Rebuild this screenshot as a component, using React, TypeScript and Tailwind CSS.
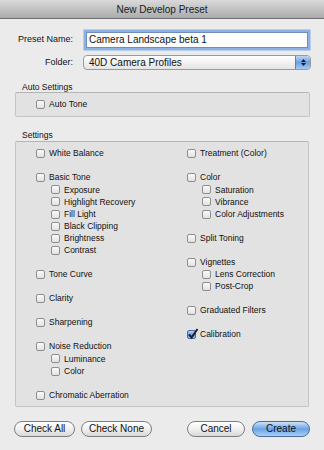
import React from 'react';

type Item = { label: string; sub?: string[]; checked?: boolean };

const leftGroups: Item[] = [
    { label: 'White Balance' },
    { label: 'Basic Tone', sub: ['Exposure', 'Highlight Recovery', 'Fill Light', 'Black Clipping', 'Brightness', 'Contrast'] },
    { label: 'Tone Curve' },
    { label: 'Clarity' },
    { label: 'Sharpening' },
    { label: 'Noise Reduction', sub: ['Luminance', 'Color'] },
    { label: 'Chromatic Aberration' },
];

const rightGroups: Item[] = [
    { label: 'Treatment (Color)' },
    { label: 'Color', sub: ['Saturation', 'Vibrance', 'Color Adjustments'] },
    { label: 'Split Toning' },
    { label: 'Vignettes', sub: ['Lens Correction', 'Post-Crop'] },
    { label: 'Graduated Filters' },
    { label: 'Calibration', checked: true },
];

const Checkbox = ({ checked }: { checked?: boolean }) => {
    if (checked) {
        return (
            <span className="relative block w-[9px] h-[9px] rounded-[2px] border border-[#4a6a9c] bg-gradient-to-b from-[#b9d4f3] via-[#6d9fe0] to-[#9ec7f2]">
                <svg className="absolute -top-[3px] -left-[1px]" width="12" height="12" viewBox="0 0 12 12">
                    <path d="M2 6.5 L4.6 9.5 L10.5 1" fill="none" stroke="#1b2030" strokeWidth="2" />
                </svg>
            </span>
        );
    }
    return <span className="block w-[9px] h-[9px] rounded-[2px] border border-[#8e8e8e] bg-gradient-to-b from-[#fafafa] to-[#e2e2e2]" />;
};

const Row = ({ label, checked, sub }: { label: string; checked?: boolean; sub?: boolean }) => (
    <div className={`flex items-center h-[12.2px] gap-[4px] ${sub ? 'pl-[15px]' : ''}`}>
        <Checkbox checked={checked} />
        <span className="text-[8.5px] leading-none text-[#111] whitespace-nowrap">{label}</span>
    </div>
);

const Column = ({ groups }: { groups: Item[] }) => (
    <div className="flex flex-col gap-[11.8px]">
        {groups.map((g) => (
            <div key={g.label} className="flex flex-col">
                <Row label={g.label} checked={g.checked} />
                {g.sub?.map((s) => <Row key={s} label={s} sub />)}
            </div>
        ))}
    </div>
);

const PillButton = ({ label, width, primary }: { label: string; width: string; primary?: boolean }) => (
    <button
        className={`block h-[16px] ${width} rounded-full border text-[10px] leading-none text-[#111] ${
            primary
                ? 'border-[#4b6d9e] bg-gradient-to-b from-[#cfe3f8] via-[#6aa3e6] to-[#a8d0f5]'
                : 'border-[#7e7e7e] bg-gradient-to-b from-[#ffffff] via-[#f0f0f0] to-[#d9d9d9]'
        }`}
    >
        {label}
    </button>
);

export default function App() {
    return (
        <div className="w-[324px] h-[450px] overflow-hidden bg-[#ebebeb] font-['Liberation_Sans',Arial,sans-serif]">
            {/* Title bar */}
            <div className="h-[19px] border-b border-[#707070] bg-gradient-to-b from-[#dadada] to-[#ababab] flex items-center justify-center">
                <span className="text-[10px] text-[#1a1a1a]">New Develop Preset</span>
            </div>

            {/* Name + folder */}
            <div className="flex items-center mt-[13px] h-[16px]">
                <span className="w-[73px] text-right text-[9px] text-[#111]">Preset Name:</span>
                <div className="ml-[13px] w-[222px] h-[16px] bg-white border border-[#6f8fb8] shadow-[0_0_0_2.5px_#8cb2e4] flex items-center px-[2px]">
                    <span className="text-[10px] leading-none text-[#111]">Camera Landscape beta 1</span>
                </div>
            </div>
            <div className="flex items-center mt-[7px] h-[15px]">
                <span className="w-[73px] text-right text-[9px] text-[#111]">Folder:</span>
                <div className="ml-[10px] w-[228px] h-[15px] rounded-[4px] border border-[#9a9a9a] bg-gradient-to-b from-[#ffffff] to-[#e4e4e4] flex items-center overflow-hidden">
                    <span className="flex-1 pl-[5px] text-[10px] leading-none text-[#111]">40D Camera Profiles</span>
                    <span className="w-[15px] h-full border-l border-[#5d82b8] bg-gradient-to-b from-[#bcd6f4] via-[#6c9fe1] to-[#a2cbf3] flex flex-col items-center justify-center gap-[1px]">
                        <svg width="5" height="3" viewBox="0 0 5 3"><path d="M0 3 L2.5 0 L5 3 Z" fill="#1a1a2a" /></svg>
                        <svg width="5" height="3" viewBox="0 0 5 3"><path d="M0 0 L2.5 3 L5 0 Z" fill="#1a1a2a" /></svg>
                    </span>
                </div>
            </div>

            {/* Auto Settings */}
            <div className="mt-[12px] ml-[22px] h-[10px] text-[8.5px] leading-[10px] text-[#111]">Auto Settings</div>
            <div className="ml-[15px] w-[295px] h-[25px] border border-[#c4c4c4] border-t-[#b4b4b4] rounded-[2px] bg-[#e2e2e2] flex items-center pl-[20px]">
                <Row label="Auto Tone" />
            </div>

            {/* Settings */}
            <div className="mt-[13px] ml-[22px] h-[10px] text-[8.5px] leading-[10px] text-[#111]">Settings</div>
            <div className="mt-[1px] ml-[15px] w-[294px] h-[266px] border border-[#c4c4c4] border-t-[#b4b4b4] rounded-[2px] bg-[#e2e2e2] grid grid-cols-[151px_1fr] pl-[20px] pt-[5.5px]">
                <Column groups={leftGroups} />
                <Column groups={rightGroups} />
            </div>

            {/* Buttons */}
            <div className="flex items-center h-[16px] mt-[14px] px-[14px] gap-[6px]">
                <PillButton label="Check All" width="w-[61px]" />
                <PillButton label="Check None" width="w-[71px]" />
                <div className="ml-auto flex items-center gap-[7px]">
                    <PillButton label="Cancel" width="w-[58px]" />
                    <PillButton label="Create" width="w-[58px]" primary />
                </div>
            </div>
        </div>
    );
}
